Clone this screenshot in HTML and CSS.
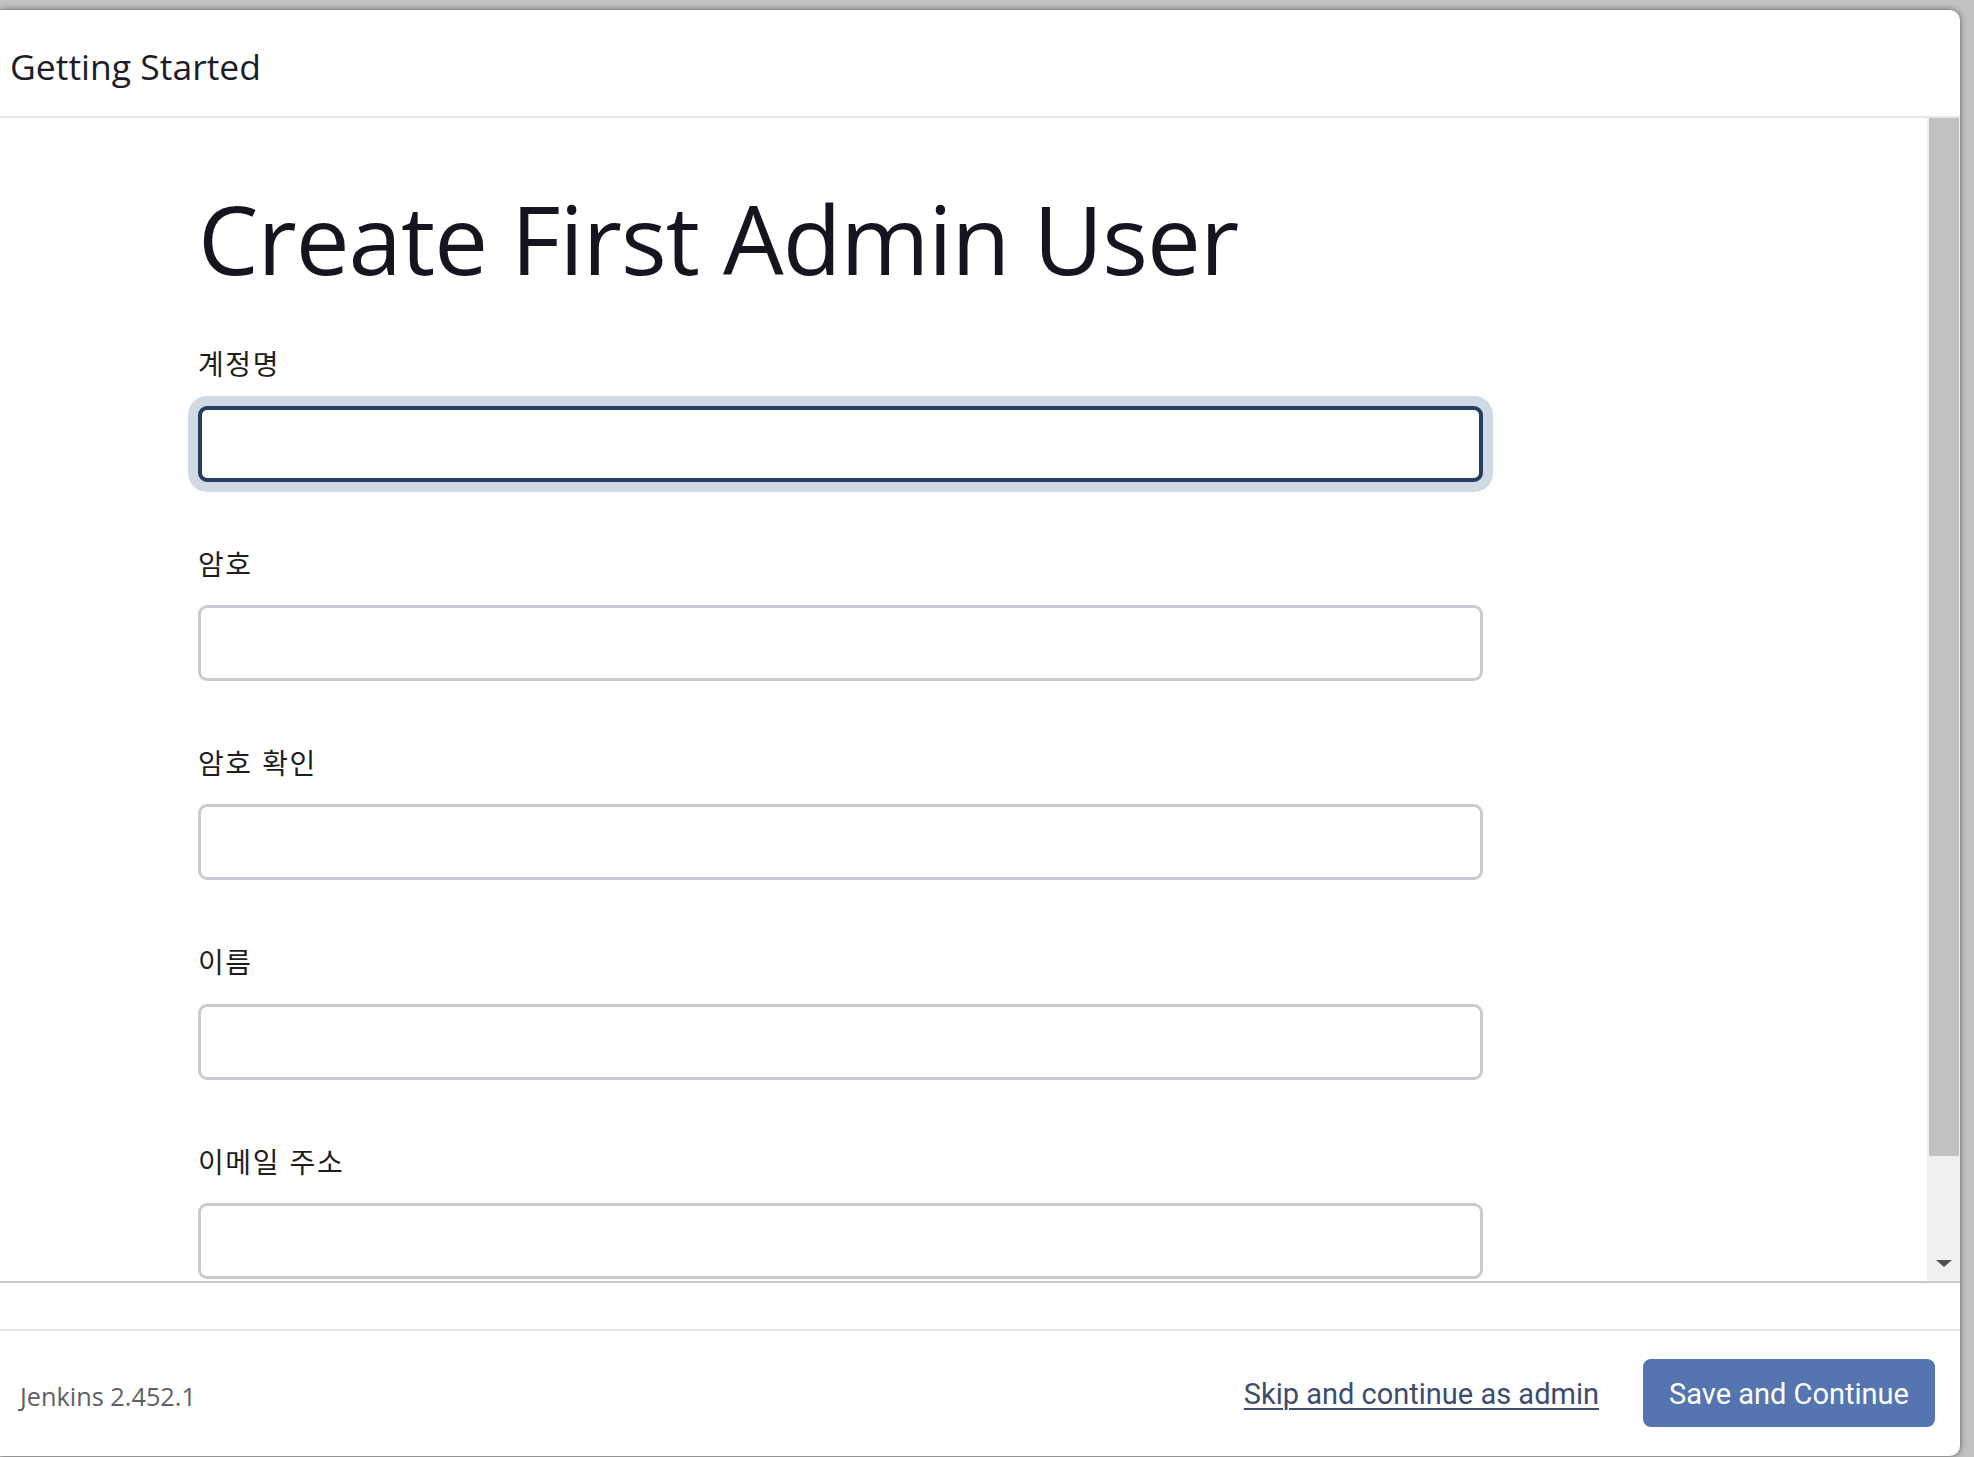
FILE: index.html
```html
<!DOCTYPE html>
<html lang="ko">
<head>
<meta charset="utf-8">
<title>Getting Started</title>
<link rel="stylesheet" href="styles.css">
</head>
<body>
<div class="modal">
  <div class="modal-header">
    <h4 class="modal-title">Getting Started</h4>
  </div>
  <div class="modal-body">
    <div class="content">
      <h1 class="page-title">Create First Admin User</h1>
      <form class="form">
        <div class="field">
          <label class="field-label">계정명</label>
          <div class="input is-focused"></div>
        </div>
        <div class="field">
          <label class="field-label">암호</label>
          <div class="input"></div>
        </div>
        <div class="field">
          <label class="field-label">암호 확인</label>
          <div class="input"></div>
        </div>
        <div class="field">
          <label class="field-label">이름</label>
          <div class="input"></div>
        </div>
        <div class="field">
          <label class="field-label">이메일 주소</label>
          <div class="input"></div>
        </div>
      </form>
    </div>
    <div class="scrollbar">
      <div class="scrollbar-thumb"></div>
      <div class="scrollbar-arrow"></div>
    </div>
  </div>
  <div class="modal-gap"></div>
  <div class="modal-footer">
    <div class="version">Jenkins 2.452.1</div>
    <div class="actions">
      <a class="skip-link" href="#">Skip and continue as admin</a>
      <button class="btn-primary" type="button">Save and Continue</button>
    </div>
  </div>
</div>
</body>
</html>
```
FILE: styles.css
```css
* { box-sizing: border-box; }

html, body {
  margin: 0;
  padding: 0;
  height: 100%;
  overflow: hidden;
}

body {
  background: #c2c2c2;
  font-family: "Open Sans", "Noto Sans CJK KR", sans-serif;
  padding-top: 10px;
}

.modal {
  width: 1960px;
  height: 1446px;
  background: #ffffff;
  border-radius: 0 10px 10px 0;
  box-shadow: 0 0 6px rgba(0, 0, 0, 0.55);
  display: flex;
  flex-direction: column;
  overflow: hidden;
}

.modal-header {
  height: 108px;
  flex: none;
  padding: 35px 0 0 10px;
  border-bottom: 2px solid #e6e6e6;
}

.modal-title {
  margin: 0;
  font-family: "Open Sans", sans-serif;
  font-weight: 400;
  font-size: 35.5px;
  line-height: 1.2;
  color: #1c1c28;
}

.modal-body {
  height: 1165px;
  flex: none;
  display: flex;
  border-bottom: 2px solid #cacaca;
}

.content {
  flex: 1;
  overflow: hidden;
  padding: 62px 0 0 198px;
}

.page-title {
  margin: 0 0 50px 0;
  font-family: "Open Sans", sans-serif;
  font-weight: 400;
  font-size: 96px;
  line-height: 1.2;
  letter-spacing: -1px;
  color: #15151f;
}

.form {
  width: 1285px;
}

.field {
  margin-bottom: 63px;
}

.field-label {
  display: block;
  margin-bottom: 24px;
  font-family: "Noto Sans CJK KR", sans-serif;
  font-size: 28px;
  line-height: 1.3;
  letter-spacing: 1.6px;
  color: #1e1e1e;
}

.input {
  height: 76px;
  border: 3px solid #c8cbd0;
  border-radius: 9px;
  background: #ffffff;
}

.input.is-focused {
  border: 4px solid #243e5e;
  box-shadow: 0 0 0 10px #d0d9e4;
}

.scrollbar {
  width: 33px;
  flex: none;
  background: #f0f0f0;
  display: flex;
  flex-direction: column;
  justify-content: space-between;
  align-items: center;
  padding-bottom: 14px;
}

.scrollbar-thumb {
  align-self: stretch;
  height: 1038px;
  margin: 0 1px 0 2px;
  background: #c1c1c1;
}

.scrollbar-arrow {
  width: 0;
  height: 0;
  border-left: 8px solid transparent;
  border-right: 8px solid transparent;
  border-top: 7px solid #505050;
}

.modal-gap {
  height: 48px;
  flex: none;
  border-bottom: 2px solid #e6e6e6;
}

.modal-footer {
  flex: 1;
  display: flex;
  align-items: center;
  justify-content: space-between;
  padding: 0 25px 0 20px;
}

.version {
  margin-top: 6px;
  font-family: "Open Sans", sans-serif;
  font-size: 25.3px;
  line-height: 1.2;
  color: #5f5f66;
}

.actions {
  display: flex;
  align-items: center;
  gap: 44px;
}

.skip-link {
  margin-top: 2px;
  font-family: Roboto, sans-serif;
  font-size: 29px;
  line-height: 1.2;
  color: #3d4c6e;
  text-decoration: underline;
  text-decoration-thickness: 2px;
  text-underline-offset: 4px;
}

.btn-primary {
  width: 292px;
  height: 68px;
  border: 0;
  border-radius: 8px;
  background: #5475af;
  color: #ffffff;
  font-family: Roboto, sans-serif;
  font-size: 29px;
  line-height: 1;
  padding: 3px 0 0 0;
  margin-top: -2px;
}
```
